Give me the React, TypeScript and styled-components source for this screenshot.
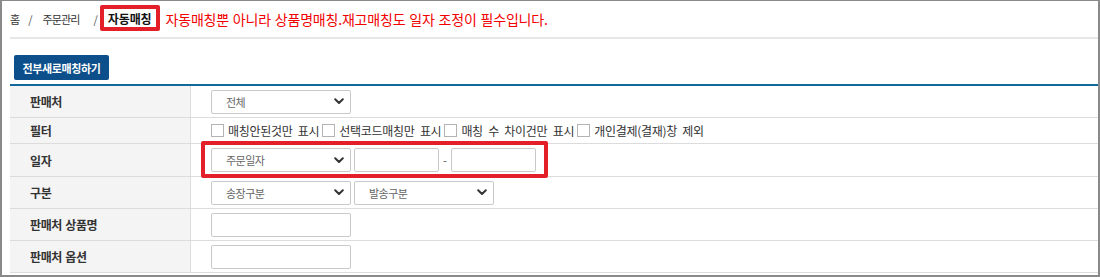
import React from "react";
import styled, { createGlobalStyle } from "styled-components";

const GlobalStyle = createGlobalStyle`
  html, body { margin: 0; padding: 0; background: #ffffff; }
  body { font-family: "Noto Sans CJK KR", "Noto Sans", sans-serif; color: #333; }
  * { box-sizing: border-box; }
`;

const Frame = styled.div`
  width: 1100px;
  height: 277px;
  border-style: solid;
  border-color: #8a8a8a;
  border-width: 1px 2px 2px 2px;
  padding-left: 8px;
  background: #fff;
  overflow: hidden;
`;

const Breadcrumb = styled.div`
  height: 36px;
  display: flex;
  align-items: center;
  font-size: 11px;
  letter-spacing: -0.9px;
  color: #333;
`;

const Crumb = styled.span`
  line-height: 1;
`;

const Sep = styled.span<{ $l: number; $r: number }>`
  color: #555;
  margin: 0 ${(p) => p.$r}px 0 ${(p) => p.$l}px;
  letter-spacing: 0;
`;

const Highlight = styled.span`
  display: inline-flex;
  align-items: center;
  height: 26px;
  margin-top: -2px;
  padding: 0 4px;
  border: 4px solid #e3202a;
  border-radius: 2px;
  font-size: 12px;
  font-weight: 700;
  letter-spacing: -0.1px;
  color: #111;
`;

const Notice = styled.span`
  margin-left: 6px;
  font-size: 14px;
  letter-spacing: -0.2px;
  word-spacing: 1px;
  color: #f20000;
`;

const Divider = styled.div`
  height: 2px;
  background: #e7e7e7;
`;

const ButtonBar = styled.div`
  padding: 16px 0 4px 4px;
  display: flex;
`;

const PrimaryButton = styled.button`
  width: 95px;
  height: 25px;
  padding: 0;
  border: none;
  border-radius: 2px;
  background: #0c4f8b;
  color: #fff;
  font-family: "Noto Sans CJK KR", sans-serif;
  font-size: 11px;
  font-weight: 700;
  letter-spacing: -0.4px;
  cursor: pointer;
`;

const Table = styled.div`
  border-top: 2px solid #12699a;
`;

const Row = styled.div<{ $h: number }>`
  display: grid;
  grid-template-columns: 181px 1fr;
  height: ${(p) => p.$h}px;
  border-bottom: 1px solid #dcdcdc;
`;

const Label = styled.div`
  background: #f4f4f4;
  border-right: 1px solid #dcdcdc;
  display: flex;
  align-items: center;
  padding-left: 20px;
  font-size: 12px;
  font-weight: 700;
  letter-spacing: -0.4px;
  word-spacing: 1px;
  color: #333;
`;

const Cell = styled.div`
  position: relative;
  display: flex;
  align-items: center;
  padding-left: 20px;
  gap: 3px;
`;

const SelectBox = styled.div<{ $w?: number }>`
  width: ${(p) => p.$w ?? 140}px;
  height: 24px;
  border: 1px solid #c9c9c9;
  border-radius: 2px;
  background: #fff;
  display: flex;
  align-items: center;
  justify-content: space-between;
  padding: 0 6px 0 14px;
  font-size: 11px;
  letter-spacing: -0.5px;
  color: #666;
`;

const TextBox = styled.div<{ $w: number }>`
  width: ${(p) => p.$w}px;
  height: 24px;
  border: 1px solid #c9c9c9;
  border-radius: 2px;
  background: #fff;
`;

const Dash = styled.span`
  font-size: 11px;
  color: #555;
  margin: 0 1px;
`;

const CheckGroup = styled.label`
  display: flex;
  align-items: center;
  gap: 4px;
  font-size: 12px;
  letter-spacing: -0.3px;
  word-spacing: 3px;
  color: #333;
`;

const CheckBox = styled.input`
  appearance: none;
  -webkit-appearance: none;
  width: 13px;
  height: 13px;
  margin: 0;
  border: 1px solid #b3b3b3;
  background: #fff;
`;

const Annotation = styled.div`
  position: absolute;
  left: 10px;
  top: -3px;
  width: 347px;
  height: 37px;
  border: 4px solid #e3202a;
  border-radius: 2px;
  pointer-events: none;
`;

const Chevron = () => (
  <svg width="10" height="7" viewBox="0 0 10 7" aria-hidden="true">
    <path d="M1.2 1.3 L5 5 L8.8 1.3" fill="none" stroke="#333" strokeWidth="2" strokeLinecap="round" strokeLinejoin="round" />
  </svg>
);

const Select = ({ text, w }: { text: string; w?: number }) => (
  <SelectBox $w={w}>
    <span>{text}</span>
    <Chevron />
  </SelectBox>
);

const filters = ["매칭안된것만 표시", "선택코드매칭만 표시", "매칭 수 차이건만 표시", "개인결제(결재)창 제외"];

export default function App() {
  return (
    <>
      <GlobalStyle />
      <Frame>
        <Breadcrumb>
          <Crumb>홈</Crumb>
          <Sep $l={9} $r={10}>/</Sep>
          <Crumb>주문관리</Crumb>
          <Sep $l={14} $r={2}>/</Sep>
          <Highlight>자동매칭</Highlight>
          <Notice>자동매칭뿐 아니라 상품명매칭.재고매칭도 일자 조정이 필수입니다.</Notice>
        </Breadcrumb>
        <Divider />
        <ButtonBar>
          <PrimaryButton>전부새로매칭하기</PrimaryButton>
        </ButtonBar>
        <Table>
          <Row $h={32}>
            <Label>판매처</Label>
            <Cell>
              <Select text="전체" />
            </Cell>
          </Row>
          <Row $h={26}>
            <Label>필터</Label>
            <Cell>
              {filters.map((f) => (
                <CheckGroup key={f}>
                  <CheckBox type="checkbox" />
                  <span>{f}</span>
                </CheckGroup>
              ))}
            </Cell>
          </Row>
          <Row $h={33}>
            <Label>일자</Label>
            <Cell>
              <Select text="주문일자" />
              <TextBox $w={85} />
              <Dash>-</Dash>
              <TextBox $w={85} />
              <Annotation />
            </Cell>
          </Row>
          <Row $h={32}>
            <Label>구분</Label>
            <Cell>
              <Select text="송장구분" />
              <Select text="발송구분" />
            </Cell>
          </Row>
          <Row $h={32}>
            <Label>판매처 상품명</Label>
            <Cell>
              <TextBox $w={140} />
            </Cell>
          </Row>
          <Row $h={32}>
            <Label>판매처 옵션</Label>
            <Cell>
              <TextBox $w={140} />
            </Cell>
          </Row>
        </Table>
      </Frame>
    </>
  );
}
